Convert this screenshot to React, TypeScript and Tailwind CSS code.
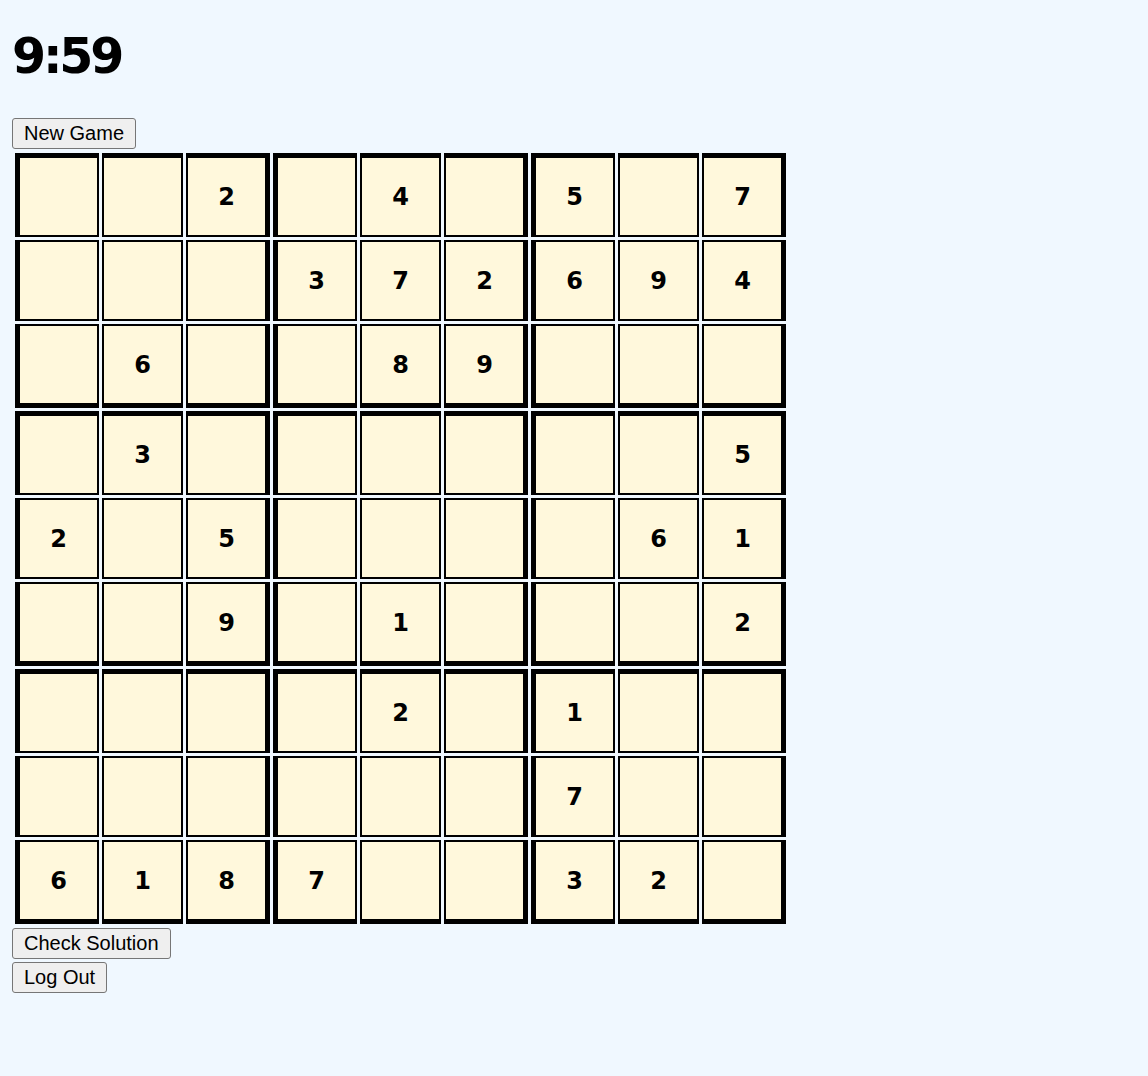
import React from 'react';

const puzzle: (number | null)[][] = [
  [null, null, 2, null, 4, null, 5, null, 7],
  [null, null, null, 3, 7, 2, 6, 9, 4],
  [null, 6, null, null, 8, 9, null, null, null],
  [null, 3, null, null, null, null, null, null, 5],
  [2, null, 5, null, null, null, null, 6, 1],
  [null, null, 9, null, 1, null, null, null, 2],
  [null, null, null, null, 2, null, 1, null, null],
  [null, null, null, null, null, null, 7, null, null],
  [6, 1, 8, 7, null, null, 3, 2, null],
];

function Cell({ value, row, col }: { value: number | null; row: number; col: number }) {
  // box edges get the heavy border
  const left = col % 3 === 0 ? 'border-l-[5px]' : 'border-l-2';
  const right = col % 3 === 2 ? 'border-r-[5px]' : 'border-r-2';
  const top = row % 3 === 0 ? 'border-t-[5px]' : 'border-t-2';
  const bottom = row % 3 === 2 ? 'border-b-[5px]' : 'border-b-2';

  return (
    <div
      className={`box-content w-[77px] h-[77px] bg-[#fff8dc] border-black border-solid ${left} ${right} ${top} ${bottom} flex items-center justify-center text-[24px] font-bold text-black`}
    >
      {value ?? ''}
    </div>
  );
}

function Button({ children }: { children: React.ReactNode }) {
  return (
    <button className="w-fit bg-[#efefef] border border-[#767676] rounded-[3px] px-[11px] py-[3px] text-[20px] leading-[23px] text-black font-['Liberation_Sans',Arial,sans-serif]">
      {children}
    </button>
  );
}

export default function App() {
  return (
    <div className="min-h-screen bg-[#f0f8ff] p-3 font-['DejaVu_Sans',Verdana,sans-serif] text-black">
      <h1 className="mt-[20px] text-[49px] leading-[50px] font-bold tracking-[-3.2px]">9:59</h1>

      <div className="mt-[36px] flex flex-col">
        <Button>New Game</Button>
      </div>

      <div className="mt-[4px] ml-[3px] w-fit grid grid-cols-[repeat(9,max-content)] gap-[3px]">
        {puzzle.map((r, ri) =>
          r.map((v, ci) => <Cell key={`${ri}-${ci}`} value={v} row={ri} col={ci} />)
        )}
      </div>

      <div className="mt-[4px] flex flex-col gap-[3px]">
        <Button>Check Solution</Button>
        <Button>Log Out</Button>
      </div>
    </div>
  );
}
